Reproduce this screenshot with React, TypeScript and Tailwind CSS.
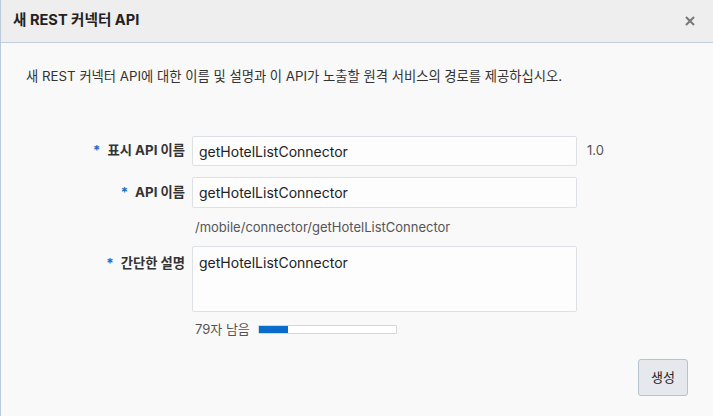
const Req = ({ children }: { children: React.ReactNode }) => (
  <span className="whitespace-nowrap text-[13.3px] font-bold text-[#333]">
    <span className="mr-[7px] text-[#1d6fc9]">*</span>
    {children}
  </span>
)

export default function App() {
  return (
    <div
      className="flex h-[416px] w-[713px] flex-col border-l border-[#bccadb] bg-[#f9f9f9] text-[#333]"
      style={{ fontFamily: 'Inter, "Noto Sans CJK KR", sans-serif' }}
    >
      <div className="flex h-[43px] items-center justify-between border-b border-[#c3cfdc] bg-[#eeeeee] pl-[12px] pr-[18px]">
        <h1 className="text-[14.6px] font-bold text-[#222]">새 REST 커넥터 API</h1>
        <svg width="10" height="10" viewBox="0 0 10 10" className="text-[#777]">
          <path d="M1 1L9 9M9 1L1 9" stroke="currentColor" strokeWidth="2" />
        </svg>
      </div>

      <p className="mt-[24px] pl-[25px] text-[13.3px] leading-[18px] text-[#333]">
        새 REST 커넥터 API에 대한 이름 및 설명과 이 API가 노출할 원격 서비스의 경로를 제공하십시오.
      </p>

      <div className="mt-[51px] grid grid-cols-[184px_385px_auto] items-center gap-x-[7px]">
        <div className="flex justify-end">
          <Req>표시 API 이름</Req>
        </div>
        <div className="flex h-[30px] items-center rounded-[2px] border border-[#dde1e6] bg-[#fdfdfe] px-[6px] text-[14px] text-[#222]">
          getHotelListConnector
        </div>
        <span className="pl-[3px] text-[13px] text-[#555]">1.0</span>

        <div className="mt-[11px] flex justify-end">
          <Req>API 이름</Req>
        </div>
        <div className="mt-[11px] flex h-[31px] items-center rounded-[2px] border border-[#dde1e6] bg-[#fdfdfe] px-[6px] text-[14px] text-[#222]">
          getHotelListConnector
        </div>
        <span className="mt-[11px]" />

        <span />
        <span className="mt-[10px] pl-[3px] text-[13px] leading-[18px] text-[#555]">
          /mobile/connector/getHotelListConnector
        </span>
        <span />

        <div className="mt-[10px] flex justify-end self-start pt-[8px]">
          <Req>간단한 설명</Req>
        </div>
        <div className="mt-[10px] h-[66px] rounded-[2px] border border-[#dde1e6] bg-[#fdfdfe] px-[6px] pt-[6px] text-[14px] leading-[20px] text-[#222]">
          getHotelListConnector
        </div>
        <span />

        <span />
        <div className="mt-[8px] flex items-center gap-[8px] pl-[3px]">
          <span className="text-[13px] leading-[18px] text-[#555]">79자 남음</span>
          <div className="h-[9px] w-[139px] rounded-[1px] border border-[#d3d8de] bg-white">
            <div className="h-full w-[29px] bg-[#0b6bcb]" />
          </div>
        </div>
        <span />
      </div>

      <div className="mt-[21px] flex justify-end pr-[25px]">
        <button className="h-[37px] w-[50px] rounded-[3px] border border-[#b8c2cf] bg-[#e5e9ee] text-[13px] text-[#222]">
          생성
        </button>
      </div>
    </div>
  )
}
